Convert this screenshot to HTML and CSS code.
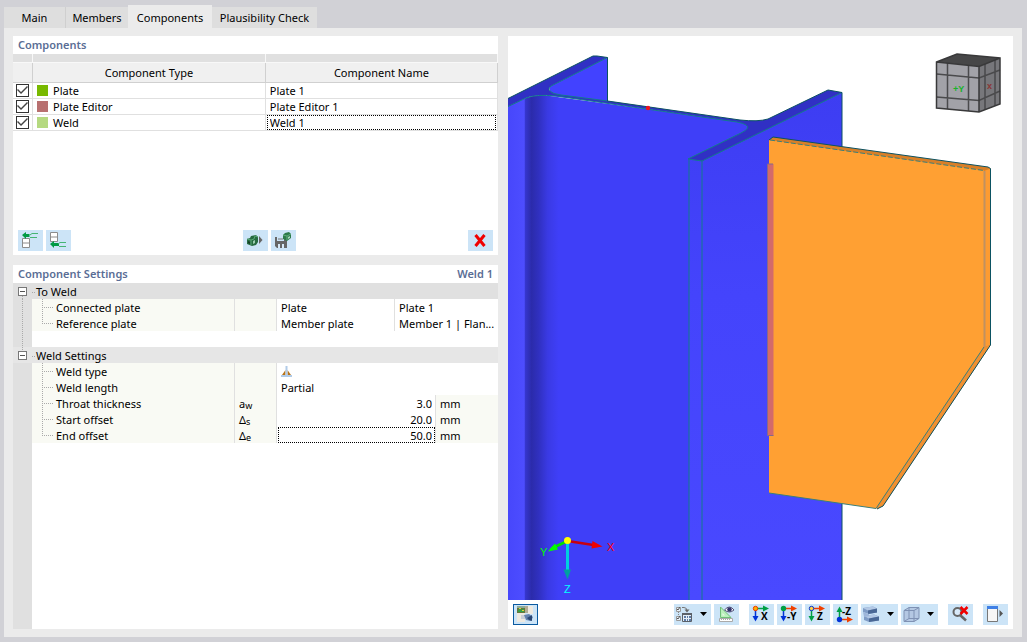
FILE: index.html
```html
<!DOCTYPE html>
<html lang="en">
<head>
<meta charset="UTF-8">
<title>Components</title>
<link rel="stylesheet" href="styles.css">
</head>
<body>
<nav class="tabs">
  <button class="tab tab-main" type="button">Main</button>
  <button class="tab tab-members" type="button">Members</button>
  <button class="tab tab-components active" type="button">Components</button>
  <button class="tab tab-check" type="button">Plausibility Check</button>
</nav>
<main class="page">
  <div class="left">
    <section class="panel">
      <h2 class="title">Components</h2>
      <table class="list">
        <colgroup><col class="c-check"><col class="c-type"><col></colgroup>
        <thead>
          <tr class="strip"><td></td><td></td><td></td></tr>
          <tr><th></th><th id="h-type">Component Type</th><th id="h-name">Component Name</th></tr>
        </thead>
        <tbody>
          <tr>
            <td class="tick"><input type="checkbox" id="on1" checked></td>
            <td><label class="type" for="on1"><span class="swatch plate"></span>Plate</label></td>
            <td><input class="cell" type="text" aria-labelledby="h-name" value="Plate 1"></td>
          </tr>
          <tr>
            <td class="tick"><input type="checkbox" id="on2" checked></td>
            <td><label class="type" for="on2"><span class="swatch editor"></span>Plate Editor</label></td>
            <td><input class="cell" type="text" aria-labelledby="h-name" value="Plate Editor 1"></td>
          </tr>
          <tr>
            <td class="tick"><input type="checkbox" id="on3" checked></td>
            <td><label class="type" for="on3"><span class="swatch weld"></span>Weld</label></td>
            <td><input class="cell current" type="text" aria-labelledby="h-name" value="Weld 1"></td>
          </tr>
        </tbody>
      </table>
      <div class="actions">
        <div class="group">
          <button class="btn" type="button" aria-label="Insert before">
            <svg width="25" height="21">
              <path d="M4.5 8.500h7v9h-7zM4.5 13h7" fill="#fff" stroke="#8c8c8c"/>
              <path d="M4 5l4-3v2h3.500v3H8v2z" fill="#009a44"/>
              <path d="M20 3.500h-6l-2 1.500M12 7.500h7" fill="none" stroke="#45b573"/>
            </svg>
          </button>
          <button class="btn" type="button" aria-label="Insert after">
            <svg width="25" height="21">
              <path d="M4.500 2.500h7v9h-7zM4.500 7h7" fill="#fff" stroke="#8c8c8c"/>
              <path d="M4 14l4-3v2h5v3H8v2z" fill="#009a44"/>
              <path d="M20 12.500h-6l-2 1.500M13 16.500h7" fill="none" stroke="#45b573"/>
            </svg>
          </button>
        </div>
        <div class="group">
          <button class="btn" type="button" aria-label="Load component">
            <svg width="25" height="21">
              <path d="M4 9l3-1 1-2 5-1 2 2v5l-2 3-4 1-5-2z" fill="#276b41"/>
              <path d="M4 9l4 1v5M8 10l3-1 1-3 3 1" fill="none" stroke="#58a777"/>
              <path d="M10 11l2-1v3l-2 1z" fill="#9ccdb0"/>
              <path d="M5 11l2 1v2l-2-1z" fill="#153e25"/>
              <path d="M16 6l3.500 4L16 14z" fill="#666"/>
            </svg>
          </button>
          <button class="btn" type="button" aria-label="Save component">
            <svg width="25" height="21">
              <path d="M4 7h12v11H6l-2-2z" fill="#666"/>
              <path d="M6 7h7v4H6z" fill="#cce4f7"/>
              <path d="M7 9h5" stroke="#777"/>
              <path d="M7 14h6v4H7z" fill="#d8e9f7"/>
              <path d="M9 14h2v4H9z" fill="#666"/>
              <path d="M12 5l2-2 4-1 2 2v4l-4 3-4-2z" fill="#2d7a4a"/>
              <path d="M12 5l4 1v4M16 6l4-2" fill="none" stroke="#62ad7d"/>
              <path d="M17 7l2-1v2l-2 1z" fill="#a9d5b9"/>
            </svg>
          </button>
        </div>
        <button class="btn" type="button" aria-label="Delete">
          <svg width="25" height="21"><path d="M7.500 5l9 11M16.500 5l-9 11" stroke="#f00000" stroke-width="3"/></svg>
        </button>
      </div>
    </section>

    <section class="panel">
      <h2 class="title">Component Settings<span>Weld 1</span></h2>
      <div class="tree">
        <table class="settings">
          <colgroup><col class="s-gutter"><col><col class="s-symbol"><col class="s-value"><col class="s-extra"><col class="s-unit"></colgroup>
          <tr class="head">
            <td class="gutter first"><button class="toggle" type="button" aria-label="Collapse"></button></td>
            <th colspan="5">To Weld</th>
          </tr>
          <tr>
            <td class="gutter"></td>
            <td class="name">Connected plate</td>
            <td class="symbol"></td>
            <td class="value lined">Plate</td>
            <td class="value" colspan="2">Plate 1</td>
          </tr>
          <tr>
            <td class="gutter"></td>
            <td class="name last">Reference plate</td>
            <td class="symbol"></td>
            <td class="value lined">Member plate</td>
            <td class="value" colspan="2">Member 1 | Flan...</td>
          </tr>
          <tr><td class="gutter"></td><td colspan="5"></td></tr>
          <tr class="head second">
            <td class="gutter end"><button class="toggle" type="button" aria-label="Collapse"></button></td>
            <th colspan="5">Weld Settings</th>
          </tr>
          <tr>
            <td></td>
            <td class="name">Weld type</td>
            <td class="symbol"></td>
            <td class="value" colspan="3">
              <svg class="weld-icon" width="11" height="11">
                <path d="M4.500 4v5H1zM6.500 4v5H10z" fill="#b87318"/>
                <path d="M4.500 0h2v9H11v2H0V9h4.500z" fill="#b1cbe8"/>
              </svg>
            </td>
          </tr>
          <tr>
            <td></td>
            <td class="name">Weld length</td>
            <td class="symbol"></td>
            <td class="value" colspan="3">Partial</td>
          </tr>
          <tr>
            <td></td>
            <td class="name"><label for="throat">Throat thickness</label></td>
            <td class="symbol">a<sub>w</sub></td>
            <td class="lined" colspan="2"><input class="cell number" type="text" id="throat" value="3.0"></td>
            <td class="unit">mm</td>
          </tr>
          <tr>
            <td></td>
            <td class="name"><label for="start">Start offset</label></td>
            <td class="symbol">Δ<sub>s</sub></td>
            <td class="lined" colspan="2"><input class="cell number" type="text" id="start" value="20.0"></td>
            <td class="unit">mm</td>
          </tr>
          <tr>
            <td></td>
            <td class="name last"><label for="end">End offset</label></td>
            <td class="symbol">Δ<sub>e</sub></td>
            <td class="lined" colspan="2"><input class="cell number current" type="text" id="end" value="50.0"></td>
            <td class="unit">mm</td>
          </tr>
        </table>
      </div>
    </section>
  </div>

  <section class="panel view">
    <svg class="scene" viewBox="508 36 505 564" preserveAspectRatio="xMinYMin slice">
      <defs>
        <linearGradient id="web" gradientUnits="userSpaceOnUse" x1="508" y1="0" x2="689" y2="0">
          <stop offset="0" stop-color="#4747fb"/>
          <stop offset=".09" stop-color="#4d4dff"/>
          <stop offset=".095" stop-color="#3636cf"/>
          <stop offset=".13" stop-color="#2b2bab"/>
          <stop offset=".17" stop-color="#3030c0"/>
          <stop offset=".22" stop-color="#3a3ae4"/>
          <stop offset=".28" stop-color="#3f3ff8"/>
          <stop offset="1" stop-color="#3f3ff8"/>
        </linearGradient>
        <linearGradient id="flange" x1="0" y1="0" x2="0" y2="1">
          <stop offset="0" stop-color="#3d3df2"/>
          <stop offset=".4" stop-color="#4444fc"/>
          <stop offset="1" stop-color="#4949ff"/>
        </linearGradient>
      </defs>
      <!-- column -->
      <path d="M550 86L607.500 57.500V102L550 96z" fill="#4242ff"/>
      <path d="M508 106l18-8q10-4 24-2l192 26h12v36l-65 2v440H508z" fill="url(#web)"/>
      <path d="M689 159h13L842 92v508H689z" fill="url(#flange)"/>
      <path d="M508 98.500L593 56h4l10.500 1.500L551 86q-5 4 3 7.500l7 1.500L608 101l132 19q18 2 28-1l60-29 14 2.500L702 161l-14-2 53-26q10-5 5-8-3-2-9-3L556 96q-20-2-30 2l-18 8.500z" fill="#3030c4"/>
      <path d="M508 106.500l18-8.500q10-4 30-2l181 26q6 1 9 3 5 3-5 8l-53 26 14 2L842 92.500M607.500 57.500L551 86q-5 4 3 7.500l7 1.500 47 6M689 159v441M702 161v439" fill="none" stroke="#137b8c"/>
      <path d="M508 98.500L593 56h4l10.500 1.500V101l132.500 19q18 2 28-1l60-29 14 2.500V600" fill="none" stroke="#0b5262"/>
      <circle cx="648" cy="108" r="2.200" fill="#f01020"/>
      <!-- plate -->
      <path d="M769 140l4-3 215 30 2.500 1.500V345L883 506l-6 3z" fill="#d97f27"/>
      <path d="M984 171l6.500-2.500V345l-6 2z" fill="#fd9b31"/>
      <path d="M984 347l6.500-2L883 506l-7 2.500z" fill="#f19030"/>
      <path d="M769 140l215 30.500V347L876 508.500 769 493z" fill="#ffa033"/>
      <path d="M984.500 171v176" stroke="#bf9162" stroke-width="2"/>
      <path d="M769 493l107 15.500L984 347" fill="none" stroke="#397f7b"/>
      <path d="M770 140l214 30.500" stroke="#397f7b" stroke-dasharray="5 2"/>
      <path d="M769 140l4-3 215 30 2.500 1.500V345L883 506l-6 3" fill="none" stroke="#0b5262"/>
      <path d="M767 164h6.500v271.500H767z" fill="#d36a6a"/>
      <path d="M773 164h-5.500v271.500h6" fill="none" stroke="#876a88"/>
      <!-- axes -->
      <path d="M567.500 541l-14 6.500" stroke="#00e000" stroke-width="3"/>
      <path d="M555 543.500l3 6-10 2 3-4z" fill="#0f0"/>
      <path d="M567.500 541l26 4" stroke="#c80010" stroke-width="2.500"/>
      <path d="M592.500 541l10 5.500-11 2z" fill="#f00000"/>
      <path d="M567.500 541v30" stroke="#00cfe0" stroke-width="3"/>
      <path d="M563.500 569.500h7.500l-3.500 10z" fill="#00a0a0"/>
      <circle cx="567.500" cy="540.500" r="3.500" fill="#ff0"/>
      <text class="axis" x="607" y="551" fill="#f00">X</text>
      <text class="axis" x="540" y="556" fill="#0f0">Y</text>
      <text class="axis" x="564" y="593" fill="#0ff">Z</text>
      <!-- view cube -->
      <path d="M936.500 62L957 54l43 4-21 8.500z" fill="#474748"/>
      <path d="M936.500 62l42.500 4.500V112l-42.500-4z" fill="#a2a2a8"/>
      <path d="M979 66.500l21-8.500v46l-21 8z" fill="#77777b"/>
      <path d="M947.500 63v46M968.500 65v46M936.500 74l42.500 4 21-8M936.500 97l42.500 3.500 21-9.500M985 64v46M995 60v46" fill="none" stroke="#4a4a4c" stroke-width="1.500"/>
      <path d="M936.500 62L957 54l43 4v46l-21 8-42.500-4zl42.500 4.500 21-8.500M979 66.500V112" fill="none" stroke="#39393a" stroke-width="1.500"/>
      <text class="cube" x="953" y="92" fill="#18b428">+Y</text>
      <text class="cube" x="987" y="89" fill="#8c3535">x</text>
    </svg>
    <div class="toolbar">
      <button class="btn pressed" type="button" aria-label="Show scene">
        <svg width="25" height="21">
          <path d="M4 2h8v7H4z" fill="#66763c"/>
          <path d="M4 2h8v2H4z" fill="#8fab9b"/>
          <path d="M5 7l2-3 2 2 2-2v4H5z" fill="#35a04a"/>
          <path d="M6 4h2v1H6zM9 6h2v1H9z" fill="#e6d43a"/>
          <path d="M12 2h3v7h-3z" fill="#b3ad94"/>
          <path d="M15 2h5v8h-5zM4 9h8v9H4z" fill="#eee9e0"/>
          <path d="M8 11h4v4H8z" fill="#c9ced6"/>
          <path d="M11 11l5-1 4 3-2 4-5-1z" fill="#6482ae"/>
          <path d="M14 14l5-3v6l-3-1z" fill="#2a4674"/>
        </svg>
      </button>
      <div class="tools">
        <div class="group">
          <button class="btn wide" type="button" aria-label="Display options">
            <svg width="37" height="21">
              <path d="M2.500 3.500h4v4h-4zM2.500 12.500h4v4h-4z" fill="#e9f2fa" stroke="#999"/>
              <path d="M3 5l1 1 2-3M3 14l1 1 2-3" fill="none" stroke="#555"/>
              <path d="M4.500 8v4" stroke="#888" stroke-dasharray="1 1"/>
              <path d="M8 3.500h2q3 0 3 3.500" fill="none" stroke="#777"/>
              <path d="M10.500 5.500h5L13 8.500z" fill="#666"/>
              <path d="M8.500 9.500h9v8h-9z" fill="#e4eef7" stroke="#5a6068"/>
              <path d="M8 9h10v2H8z" fill="#5a6068"/>
              <path d="M10 12h2v2h-2zM13 12h1v2h-1zM15 12h2v2h-2zM10 15h2v2h-2zM13 15h1v2h-1zM15 15h2v2h-2z" fill="#5d7ba5"/>
              <path d="M26 8h7l-3.500 4z"/>
            </svg>
          </button>
          <button class="btn" type="button" aria-label="Show dimensions">
            <svg width="25" height="21">
              <path d="M6.500 3v10.500H17z" fill="#baf0bb" stroke="#6fbf78"/>
              <path d="M8.500 9v2.500H11z" fill="#e9f8ea"/>
              <path d="M5.500 14.500h13v3h-13z" fill="#fff" stroke="#aaa"/>
              <path d="M7.500 15v1M9.500 15v1M11.500 15v1M13.500 15v1M15.500 15v1" stroke="#aaa"/>
              <path d="M10.500 6q5-6 9.500 0-4.500 4-9.500 0z" fill="#fff" stroke="#52527a"/>
              <circle cx="15.500" cy="5.500" r="2.300" fill="#34346b"/>
            </svg>
          </button>
        </div>
        <div class="group">
          <button class="btn" type="button" aria-label="View in X">
            <svg width="25" height="21">
              <path d="M7 4.500h8" stroke="#00a045" stroke-width="1.500"/>
              <path d="M14 1.500l6 3-6 3z" fill="#00a045"/>
              <path d="M6.500 5v8" stroke="#0033d8" stroke-width="1.500"/>
              <path d="M3.500 12h6l-3 5.500z" fill="#0033d8"/>
              <circle cx="6.500" cy="4.500" r="2.200" fill="#ffb000" stroke="#e83b00"/>
              <text class="mark" x="12" y="16">X</text>
            </svg>
          </button>
          <button class="btn" type="button" aria-label="View in -Y">
            <svg width="25" height="21">
              <path d="M7 4.500h8" stroke="#f04000" stroke-width="1.500"/>
              <path d="M14 1.500l6 3-6 3z" fill="#f04000"/>
              <path d="M6.500 5v8" stroke="#0033d8" stroke-width="1.500"/>
              <path d="M3.500 12h6l-3 5.500z" fill="#0033d8"/>
              <circle cx="6.500" cy="4.500" r="2.700" fill="#00a045"/>
              <text class="mark" x="10" y="16">-Y</text>
            </svg>
          </button>
          <button class="btn" type="button" aria-label="View in Z">
            <svg width="25" height="21">
              <path d="M7 4.500h8" stroke="#f04000" stroke-width="1.500"/>
              <path d="M14 1.500l6 3-6 3z" fill="#f04000"/>
              <path d="M6.500 5v8" stroke="#00a045" stroke-width="1.500"/>
              <path d="M3.500 12h6l-3 5.500z" fill="#00a045"/>
              <circle cx="6.500" cy="4.500" r="2.200" fill="#ffd34d" stroke="#0033d8"/>
              <text class="mark" x="12" y="16">Z</text>
            </svg>
          </button>
          <button class="btn" type="button" aria-label="View in -Z">
            <svg width="25" height="21">
              <path d="M7 15.500h8" stroke="#f04000" stroke-width="1.500"/>
              <path d="M14 12.500l6 3-6 3z" fill="#f04000"/>
              <path d="M6.500 15V8" stroke="#00a045" stroke-width="1.500"/>
              <path d="M3.500 8h6l-3-5.500z" fill="#00a045"/>
              <circle cx="6.500" cy="15.500" r="2.700" fill="#0033d8"/>
              <text class="mark" x="9" y="11">-Z</text>
            </svg>
          </button>
          <button class="btn wide" type="button" aria-label="Rendering">
            <svg width="37" height="21">
              <path d="M2 4l10-1.500 4 2v4L8 10 2 8z" fill="#7f9cc6"/>
              <path d="M2 4l10-1.500 4 2L7 6.500z" fill="#b3c8e5"/>
              <path d="M7 6.500l9-2v4L7 10z" fill="#4a6896"/>
              <path d="M3 12l10-1.500 5 2v4L8 18l-5-2z" fill="#7f9cc6"/>
              <path d="M3 12l10-1.500 5 2-10 2z" fill="#b3c8e5"/>
              <path d="M8 14.500l10-2v4L8 18z" fill="#4a6896"/>
              <path d="M2 8l6 2v2l-5 1z" fill="#9db6da"/>
              <path d="M26 8h7l-3.500 4z"/>
            </svg>
          </button>
          <button class="btn wide" type="button" aria-label="Box view">
            <svg width="37" height="21">
              <path d="M3 6.500l5-3h10v11l-5 3H3z" fill="#b4c8e3"/>
              <path d="M3 6.500h10v11H3zM3 6.500l5-3h10l-5 3M18 3.500v11l-5 3M8 3.500v11M8 14.500h10M8 14.500l-5 3" fill="none" stroke="#7f92b4"/>
              <path d="M26 8h7l-3.500 4z"/>
            </svg>
          </button>
        </div>
        <div class="group">
          <button class="btn" type="button" aria-label="Reset zoom">
            <svg width="25" height="21">
              <circle cx="9.500" cy="8" r="4" fill="#d8eafa" stroke="#666" stroke-width="2"/>
              <path d="M12 11l6 5.500" stroke="#666" stroke-width="2.500"/>
              <path d="M12.500 3l7 7M19.500 3l-7 7" stroke="#f00000" stroke-width="2.500"/>
            </svg>
          </button>
        </div>
        <div class="group">
          <button class="btn" type="button" aria-label="Side panel">
            <svg width="25" height="21">
              <path d="M4.500 2.500h10v15h-10z" fill="#f6f6f6" stroke="#777"/>
              <path d="M4 2h11v3H4z" fill="#3f80e6"/>
              <path d="M16.500 6l3.500 3.500-3.500 3.500z" fill="#555"/>
            </svg>
          </button>
        </div>
      </div>
    </div>
  </section>
</main>
</body>
</html>
```

FILE: styles.css
```css
* {
  box-sizing: border-box;
}

body {
  margin: 0;
  padding: 5px 5px 5px 4px;
  height: 100vh;
  display: flex;
  flex-direction: column;
  background: #d1d1d6;
  color: #000;
  font: 11px/16px "Noto Sans", "Open Sans", sans-serif;
}

button,
input {
  font: inherit;
  color: inherit;
  margin: 0;
  padding: 0;
  border: 0;
}

/* tabs */
.tabs {
  display: flex;
  align-items: flex-end;
  height: 23px;
}

.tab {
  height: 21px;
  background: #dedede;
}

.tab-main {
  width: 62px;
  border-right: 1px solid #cfcfcf;
}

.tab-members {
  width: 62px;
}

.tab-components {
  width: 84px;
}

.tab-check {
  width: 105px;
}

.tab.active {
  height: 23px;
  padding-top: 2px;
  background: #ebebeb;
}

.page {
  flex: 1;
  min-height: 0;
  display: grid;
  grid-template-columns: minmax(0, 97fr) minmax(0, 101fr);
  gap: 10px;
  padding: 8px 9px;
  background: #ebebeb;
}

.left {
  display: grid;
  grid-template-rows: 3fr 5fr;
  gap: 10px;
  min-height: 0;
}

.panel {
  display: flex;
  flex-direction: column;
  min-height: 0;
  background: #fff;
}

.title {
  display: flex;
  justify-content: space-between;
  margin: 0;
  padding: 0 5px;
  color: #5a6d95;
  font-size: 11px;
  font-weight: 600;
  line-height: 18px;
}

table {
  width: 100%;
  table-layout: fixed;
  border-collapse: separate;
  border-spacing: 0;
}

td,
th {
  padding: 0;
  font-weight: normal;
  white-space: nowrap;
}

/* component list */
.c-check {
  width: 20px;
}

.c-type {
  width: 48%;
}

.strip td {
  height: 9px;
  background: #e0e0e0;
  border-right: 1px solid #f8f8f8;
  border-bottom: 1px solid #f8f8f8;
}

.list th {
  height: 20px;
  background: #f0f0f0;
  border-right: 1px solid #d0d0d0;
  border-bottom: 1px solid #d0d0d0;
}

.list tbody td {
  height: 16px;
  line-height: 15px;
  border-right: 1px solid #e0e0e0;
  border-bottom: 1px solid #e0e0e0;
}

.tick {
  padding-left: 3px;
}

.tick input {
  appearance: none;
  display: block;
  width: 13px;
  height: 13px;
  border: 1px solid #333;
  background: #fff;
}

.tick input:checked::before {
  content: "";
  display: block;
  width: 11px;
  height: 11px;
  background: #444;
  clip-path: polygon(0 5px, 1px 4px, 4px 7px, 10px 1px, 11px 2px, 4px 9px);
}

.type {
  display: flex;
  align-items: center;
  gap: 5px;
  padding-left: 4px;
}

.swatch {
  width: 11px;
  height: 11px;
}

.plate {
  background: #78b900;
}

.editor {
  background: #b87070;
}

.weld {
  background: #b5d980;
}

.cell {
  display: block;
  width: 100%;
  height: 15px;
  padding: 0 4px;
  background: none;
}

.cell.current {
  width: calc(100% - 2px);
  margin: 0 1px;
  padding: 0 2px;
  border: 1px dotted #000;
}

.actions {
  display: flex;
  justify-content: space-between;
  margin-top: auto;
  padding: 4px 5px;
}

.group {
  display: flex;
  gap: 3px;
}

.btn {
  width: 25px;
  height: 21px;
  background: #cce4f7;
}

.btn svg {
  display: block;
}

.wide {
  width: 37px;
}

.pressed {
  outline: 1px solid #0a5aa0;
  outline-offset: -1px;
}

/* settings tree */
.tree {
  flex: 1;
  background: linear-gradient(to right, #e0e0e0 19px, #fff 19px);
}

.s-gutter {
  width: 19px;
}

.s-symbol {
  width: 42px;
}

.s-value {
  width: 118px;
}

.s-extra {
  width: 41px;
}

.s-unit {
  width: 62px;
}

.settings td,
.settings th {
  height: 16px;
  line-height: 14px;
  padding-top: 2px;
}

.settings .lined:has(input) {
  padding-top: 0;
}

.head {
  background: #e0e0e0;
}

.head.second {
  background: #e6e6e6;
}

.head th {
  padding-left: 4px;
  text-align: left;
  background: repeating-linear-gradient(to right, #aaa 0 1px, transparent 1px 2px) 0 9px / 3px 1px no-repeat;
}

.gutter {
  background: repeating-linear-gradient(#aaa 0 1px, transparent 1px 2px) 9px 0 / 1px 16px no-repeat;
}

.gutter.first {
  background-position: 9px 9px;
}

.gutter.end {
  background-size: 1px 8px;
}

.toggle {
  display: block;
  width: 9px;
  height: 9px;
  margin-left: 5px;
  border: 1px solid #777;
  background: linear-gradient(#555, #555) 1px 3px / 5px 1px no-repeat #fff;
}

.name {
  padding-left: 24px;
  background:
    repeating-linear-gradient(#aaa 0 1px, transparent 1px 2px) 10px 0 / 1px 16px no-repeat,
    repeating-linear-gradient(to right, #aaa 0 1px, transparent 1px 2px) 10px 8px / 11px 1px no-repeat,
    #f9faf4;
}

.name.last {
  background-size: 1px 8px, 11px 1px, auto;
}

.name,
.symbol {
  border-right: 1px solid #e0e0e0;
}

.symbol {
  padding-left: 4px;
  background: #f9faf4;
}

.symbol sub {
  font-size: 9px;
  line-height: 1px;
  vertical-align: -1px;
}

.settings .value {
  padding-left: 4px;
}

.lined {
  border-right: 1px solid #e0e0e0;
}

.weld-icon {
  display: block;
}

.number {
  height: 16px;
  padding: 2px 3px 0;
  text-align: right;
}

.number.current {
  width: calc(100% - 1px);
  margin: 0 0 0 1px;
  padding: 2px 2px 0;
}

.unit {
  padding-left: 4px;
  background: #f9faf4;
}

/* model view */
.scene {
  display: block;
  flex: 1;
  width: 100%;
  min-height: 0;
}

.axis {
  font: 11px "Liberation Sans", sans-serif;
}

.cube {
  font: bold 9px "Liberation Sans", sans-serif;
}

.mark {
  font: bold 10px "Open Sans", sans-serif;
}

.toolbar {
  display: flex;
  justify-content: space-between;
  padding: 4px 5px;
}

.tools {
  display: flex;
  gap: 10px;
}
```
